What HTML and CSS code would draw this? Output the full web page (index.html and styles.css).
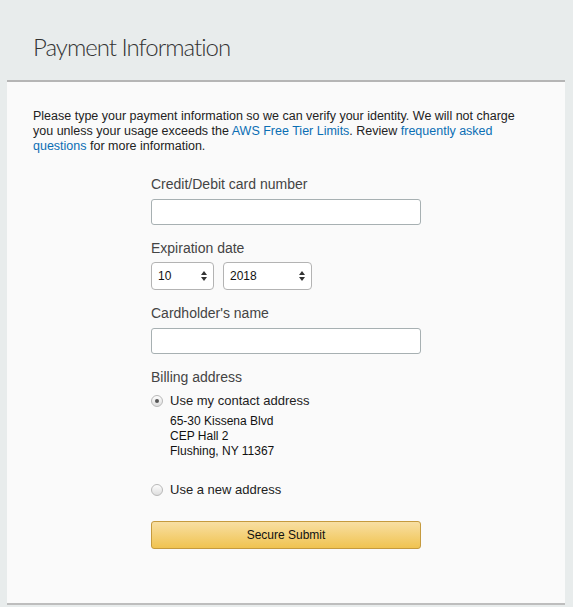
FILE: index.html
```html
<!DOCTYPE html>
<html>
<head>
<meta charset="utf-8">
<link rel="stylesheet" href="styles.css">
</head>
<body>
<header class="header">
  <h1 class="title">Payment Information</h1>
</header>
<main class="card">
  <p class="intro">Please type your payment information so we can verify your identity. We will not charge you unless your usage exceeds the <a href="#">AWS Free Tier Limits</a>. Review <a href="#">frequently asked questions</a> for more information.</p>
  <form class="form">
    <div class="field">
      <div class="label">Credit/Debit card number</div>
      <div class="input"></div>
    </div>
    <div class="field">
      <div class="label">Expiration date</div>
      <div class="selects">
        <div class="select month"><span>10</span><svg class="arrows" width="6" height="10" viewBox="0 0 6 10"><path d="M0 4 L3 0 L6 4 Z M0 6 L3 10 L6 6 Z" fill="#333"/></svg></div>
        <div class="select year"><span>2018</span><svg class="arrows" width="6" height="10" viewBox="0 0 6 10"><path d="M0 4 L3 0 L6 4 Z M0 6 L3 10 L6 6 Z" fill="#333"/></svg></div>
      </div>
    </div>
    <div class="field">
      <div class="label">Cardholder's name</div>
      <div class="input"></div>
    </div>
    <div class="field">
      <div class="label">Billing address</div>
      <div class="radio-row"><span class="radio checked"></span><span>Use my contact address</span></div>
      <div class="address">65-30 Kissena Blvd<br>CEP Hall 2<br>Flushing, NY 11367</div>
      <div class="radio-row new"><span class="radio"></span><span>Use a new address</span></div>
    </div>
    <div class="button">Secure Submit</div>
  </form>
</main>
</body>
</html>
```

FILE: styles.css
```css
html, body {
  margin: 0;
  padding: 0;
}
body {
  background: #e8ecec;
  font-family: "Liberation Sans", Arial, sans-serif;
  color: #222;
  height: 607px;
  overflow: hidden;
}
.header {
  height: 80px;
  box-sizing: border-box;
  padding: 32px 0 0 33px;
}
.title {
  margin: 0;
  font-family: Lato, Roboto, "Liberation Sans", sans-serif;
  font-weight: 300;
  font-size: 24px;
  line-height: 30px;
  color: #333;
  letter-spacing: -1px;
}
.card {
  margin: 0 8px 0 7px;
  background: #fafafa;
  border-top: 2px solid #b5b5b5;
  border-bottom: 2px solid #bdbdbd;
  padding: 27px 26px 54px 26px;
}
.intro {
  margin: 0;
  max-width: 496px;
  font-size: 12.5px;
  line-height: 15px;
  color: #222;
}
.intro a {
  color: #0a6eb4;
  text-decoration: none;
}
.form {
  margin: 21px 0 0 118px;
  width: 270px;
}
.field {
  margin-bottom: 14px;
}
.label {
  font-size: 14px;
  line-height: 18px;
  color: #444;
  margin-bottom: 6px;
}
.input {
  height: 26px;
  box-sizing: border-box;
  background: #fff;
  border: 1px solid #a7b0b2;
  border-radius: 3px;
}
.selects {
  display: flex;
  gap: 9px;
  margin-top: -1px;
}
.select {
  height: 28px;
  box-sizing: border-box;
  background: #fff;
  border: 1px solid #b3b3b3;
  border-radius: 4px;
  display: flex;
  align-items: center;
  justify-content: space-between;
  padding: 0 6px 0 6px;
  font-size: 12px;
  color: #111;
}
.select.month { width: 63px; }
.select.year { width: 89px; }
.radio-row {
  display: flex;
  align-items: center;
  gap: 7px;
  font-size: 13px;
  line-height: 18px;
  color: #222;
}
.radio {
  width: 12px;
  height: 12px;
  box-sizing: border-box;
  border-radius: 50%;
  border: 1px solid #b8b8b8;
  background: linear-gradient(#fdfdfd, #dedede);
  position: relative;
}
.radio.checked::after {
  content: "";
  position: absolute;
  left: 3px;
  top: 3px;
  width: 4px;
  height: 4px;
  border-radius: 50%;
  background: #555;
}
.address {
  margin: 4px 0 0 19px;
  font-size: 12px;
  line-height: 15px;
  color: #111;
}
.radio-row.new {
  margin-top: 22px;
}
.button {
  margin-top: 22px;
  height: 28px;
  box-sizing: border-box;
  border: 1px solid #c59a3e;
  border-radius: 3px;
  background: linear-gradient(#f8dfa3, #f0c350);
  display: flex;
  align-items: center;
  justify-content: center;
  font-size: 12px;
  color: #111;
}
```
